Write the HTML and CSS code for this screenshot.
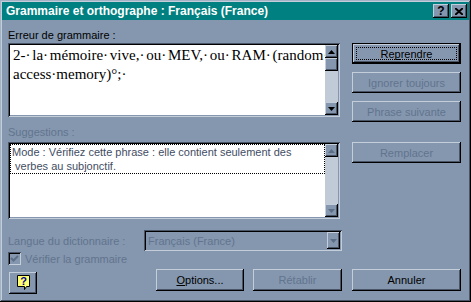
FILE: index.html
```html
<!DOCTYPE html>
<html lang="fr">
<head>
  <meta charset="UTF-8" />
  <title>Grammaire et orthographe</title>
  <link rel="stylesheet" href="styles.css">
</head>
<body>
  <div class="window">
    <div class="titlebar">
      <span class="title">Grammaire et orthographe : Français (France)</span>
      <div class="caption-btns">
        <span class="cap-btn">?</span>
        <span class="cap-btn">
          <svg width="8" height="7" viewBox="0 0 8 7"><path d="M0 0 L8 7 M8 0 L0 7" stroke="#000" stroke-width="2"/></svg>
        </span>
      </div>
    </div>

    <div class="content">
      <div class="main">
        <div class="left">
          <div class="label">Erreur de <u>g</u>rammaire :</div>
          <div class="field error-box">
            <div class="error-text">
              <div class="first-line">2-·&nbsp;la· mémoire· vive,· ou· MEV,· ou· RAM· (random·</div>
              <div>access·memory)°;·</div>
            </div>
            <div class="scrollbar">
              <span class="sb-btn"><svg width="7" height="4" viewBox="0 0 7 4"><path d="M3.5 0 L7 4 H0 Z" fill="#000"/></svg></span>
              <span class="sb-btn"></span>
              <span class="sb-track"></span>
              <span class="sb-btn"><svg width="7" height="4" viewBox="0 0 7 4"><path d="M0 0 H7 L3.5 4 Z" fill="#000"/></svg></span>
            </div>
          </div>

          <div class="label disabled sugg-label">Suggestions :</div>
          <div class="field suggest-box">
            <div class="suggest-list">
              <div class="suggest-item">
                <div>Mode : Vérifiez cette phrase : elle contient seulement des</div>
                <div>&nbsp;verbes au subjonctif.</div>
              </div>
            </div>
            <div class="scrollbar">
              <span class="sb-btn"><svg width="7" height="4" viewBox="0 0 7 4"><path d="M3.5 0 L7 4 H0 Z" fill="#5d6f87"/></svg></span>
              <span class="sb-track"></span>
              <span class="sb-btn"><svg width="7" height="4" viewBox="0 0 7 4"><path d="M0 0 H7 L3.5 4 Z" fill="#5d6f87"/></svg></span>
            </div>
          </div>
        </div>

        <div class="right">
          <button class="btn default"><span class="focus">Re<u>p</u>rendre</span></button>
          <button class="btn disabled">Ignorer toujours</button>
          <button class="btn disabled">Phrase suivante</button>
          <button class="btn disabled replace">Remplacer</button>
        </div>
      </div>

      <div class="lang-row">
        <span class="lang-label disabled">Langue du dictionnaire :</span>
        <div class="field combo">
          <span class="combo-text disabled">Français (France)</span>
          <span class="sb-btn combo-btn"><svg width="7" height="4" viewBox="0 0 7 4"><path d="M0 0 H7 L3.5 4 Z" fill="#5d6f87"/></svg></span>
        </div>
      </div>

      <div class="check-row">
        <span class="field checkbox">
          <svg width="9" height="9" viewBox="0 0 9 9"><path d="M1 4 L3.5 6.5 L8 2" stroke="#5d6f87" stroke-width="2" fill="none"/></svg>
        </span>
        <span class="disabled">Vérifier la grammaire</span>
      </div>

      <div class="button-row">
        <button class="btn help-btn">
          <svg width="13" height="16" viewBox="0 0 13 16">
            <path d="M0.5 0.5 H12.5 V11.5 H9.5 L7.5 14.5 V11.5 H0.5 Z" fill="#ffff70" stroke="#000"/>
            <text x="6.5" y="10" text-anchor="middle" font-family="Liberation Sans, sans-serif" font-weight="bold" font-size="11" fill="#000090">?</text>
          </svg>
        </button>
        <button class="btn options"><u>O</u>ptions...</button>
        <button class="btn disabled restore">Rétablir</button>
        <button class="btn cancel">Annuler</button>
      </div>
    </div>
  </div>
</body>
</html>
```

FILE: styles.css
```css
* { box-sizing: border-box; }
body {
  margin: 0; background: #8497af;
  font-family: "Liberation Sans", Arial, sans-serif; font-size: 11px; color: #000;
}
u { text-decoration-thickness: 1px; text-underline-offset: 1px; }
.disabled { color: #62748d; }

.window {
  width: 471px; height: 302px; padding: 2px; background: #8497af;
  box-shadow: inset -1px -1px #000, inset 1px 1px #a3b2c5,
              inset -2px -2px #4a5668, inset 2px 2px #c4cedb;
}
.titlebar {
  height: 18px; background: #008080; color: #fff;
  display: flex; align-items: center; padding: 0 2px 0 4px;
  font-size: 12px; font-weight: bold;
}
.caption-btns { margin-left: auto; display: flex; gap: 2px; }
.cap-btn {
  width: 16px; height: 14px; background: #8497af;
  display: flex; align-items: center; justify-content: center;
  font-size: 12px; font-weight: bold; color: #000;
  box-shadow: inset -1px -1px #000, inset 1px 1px #c4cedb, inset -2px -2px #4a5668;
}

.content { padding: 9px 8px 0 6px; }
.main { display: flex; gap: 12px; }
.left { width: 332px; }
.label { height: 13px; line-height: 13px; margin-bottom: 1px; }
.sugg-label { margin-top: 9px; margin-bottom: 3px; }

.field {
  background: #fff; padding: 2px;
  box-shadow: inset 1px 1px #4a5668, inset -1px -1px #c4cedb,
              inset 2px 2px #000, inset -2px -2px #8497af;
}
.error-box { height: 74px; display: flex; }
.error-text {
  flex: 1; overflow: hidden; white-space: nowrap;
  font-family: "Liberation Serif", "Times New Roman", serif;
  font-size: 15px; line-height: 19px; padding: 1px 3px;
}
.first-line { word-spacing: -2px; }
.scrollbar { width: 13px; background: #c1cbd8; display: flex; flex-direction: column; }
.sb-btn {
  width: 13px; height: 13px; flex: none; background: #8497af;
  display: flex; align-items: center; justify-content: center;
  box-shadow: inset -1px -1px #000, inset 1px 1px #c4cedb, inset -2px -2px #4a5668;
}
.sb-track { flex: 1; }

.suggest-box { height: 77px; display: flex; }
.suggest-list { flex: 1; }
.suggest-item {
  border: 1px dotted #000; color: #3f4d63;
  line-height: 14px; padding: 0 0 0 1px;
}

.right { width: 109px; margin-top: 14px; display: flex; flex-direction: column; }
.btn {
  height: 21px; width: 100%; padding: 0; border: none;
  background: #8497af; color: #000;
  font-family: inherit; font-size: 11px;
  box-shadow: inset -1px -1px #000, inset 1px 1px #c4cedb, inset -2px -2px #4a5668;
}
.btn.disabled { color: #62748d; }
.right .btn + .btn { margin-top: 8px; }
.right .replace { margin-top: 20px !important; }
.btn.default {
  border: 1px solid #000; padding: 3px;
  box-shadow: inset -1px -1px #000, inset 1px 1px #c4cedb, inset -2px -2px #4a5668;
}
.focus {
  display: flex; align-items: center; justify-content: center;
  height: 100%; border: 1px dotted #000;
}

.lang-row { margin-top: 11px; height: 21px; display: flex; align-items: center; }
.lang-label { width: 136px; }
.combo {
  width: 198px; height: 21px; background: #8497af;
  display: flex; align-items: center;
}
.combo-text { flex: 1; padding-left: 2px; }
.combo-btn { height: 17px; }

.check-row { margin-top: 1px; height: 13px; display: flex; align-items: center; gap: 4px; }
.checkbox {
  width: 13px; height: 13px; background: #8497af;
  display: flex; align-items: center; justify-content: center;
}

.button-row { margin-top: 4px; display: flex; align-items: flex-start; }
.button-row .btn { height: 22px; }
.help-btn {
  width: 28px !important; margin: 3px 0 0 1px;
  display: flex; align-items: center; justify-content: center;
}
.options { width: 88px !important; margin-left: auto; }
.restore { width: 89px !important; margin-left: 9px; }
.cancel { width: 109px !important; margin-left: 10px; }
```
